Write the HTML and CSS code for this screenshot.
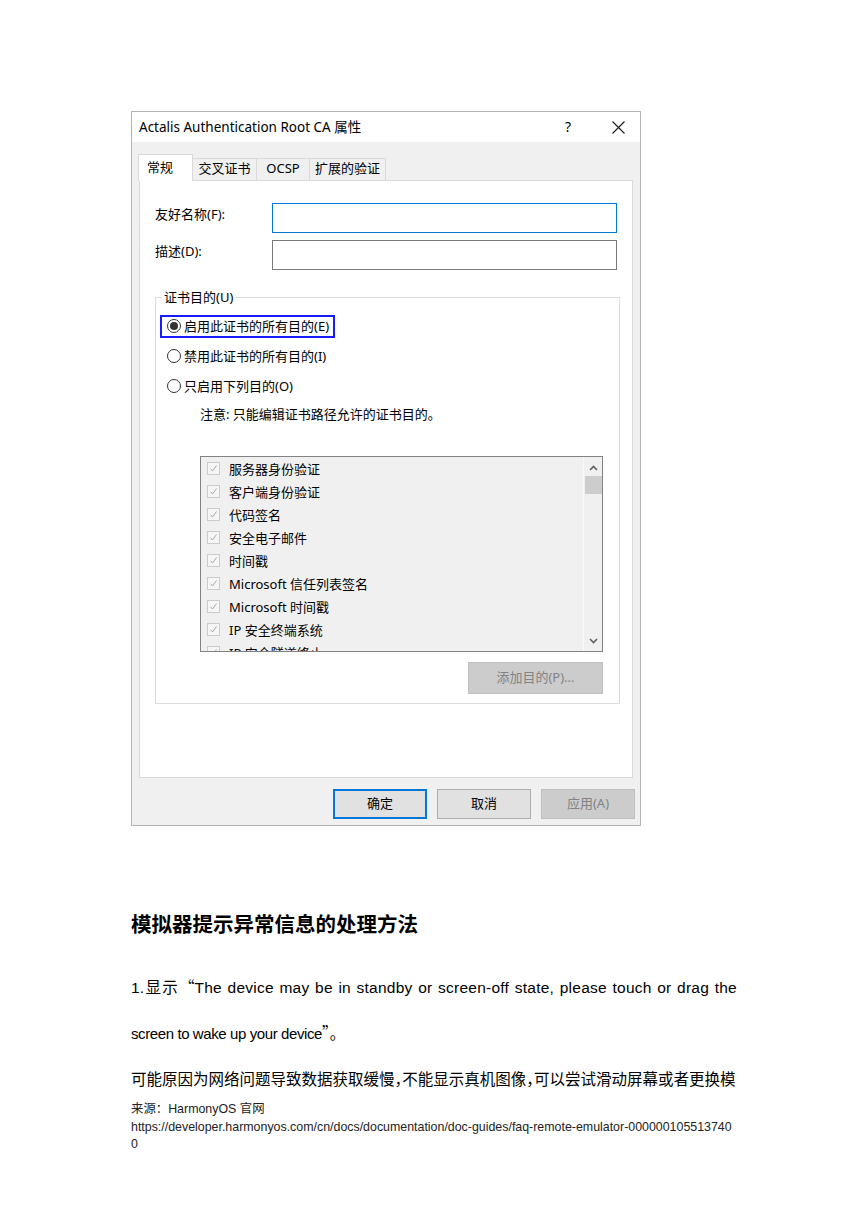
FILE: index.html
```html
<!DOCTYPE html>
<html lang="zh-CN">
<head>
  <meta charset="UTF-8" />
  <meta name="viewport" content="width=device-width, initial-scale=1.0"/>
  <title>模拟器提示异常信息的处理方法</title>
  <link rel="stylesheet" href="styles.css">
</head>
<body>

<div class="page">

  <div class="dialog">
    <div class="titlebar">
      <span class="title">Actalis Authentication Root CA 属性</span>
      <span class="help">?</span>
      <span class="close">
        <svg width="13" height="13" viewBox="0 0 13 13">
          <path d="M0.5 0.5 L12.5 12.5 M12.5 0.5 L0.5 12.5" stroke="#1a1a1a" stroke-width="1.1" fill="none"/>
        </svg>
      </span>
    </div>

    <div class="dialog-body">
      <div class="tabs">
        <div class="tab active">常规</div>
        <div class="tab w64">交叉证书</div>
        <div class="tab w53">OCSP</div>
        <div class="tab w76">扩展的验证</div>
      </div>

      <div class="panel">
        <div class="field-row first">
          <label class="field-label">友好名称(F):</label>
          <div class="textbox focused"></div>
        </div>
        <div class="field-row">
          <label class="field-label">描述(D):</label>
          <div class="textbox"></div>
        </div>

        <fieldset class="group">
          <legend>证书目的(U)</legend>

          <div class="radio focused"><span class="radio-dot checked"></span>启用此证书的所有目的(E)</div>
          <div class="radio"><span class="radio-dot"></span>禁用此证书的所有目的(I)</div>
          <div class="radio"><span class="radio-dot"></span>只启用下列目的(O)</div>

          <p class="note">注意: 只能编辑证书路径允许的证书目的。</p>

          <div class="listbox">
            <ul class="purposes">
              <li><span class="check"><svg width="11" height="11" viewBox="0 0 11 11"><path d="M2.5 5.8 L4.5 8 L8.5 2.5" stroke="#a8a8a8" stroke-width="1" fill="none"/></svg></span>服务器身份验证</li>
              <li><span class="check"><svg width="11" height="11" viewBox="0 0 11 11"><path d="M2.5 5.8 L4.5 8 L8.5 2.5" stroke="#a8a8a8" stroke-width="1" fill="none"/></svg></span>客户端身份验证</li>
              <li><span class="check"><svg width="11" height="11" viewBox="0 0 11 11"><path d="M2.5 5.8 L4.5 8 L8.5 2.5" stroke="#a8a8a8" stroke-width="1" fill="none"/></svg></span>代码签名</li>
              <li><span class="check"><svg width="11" height="11" viewBox="0 0 11 11"><path d="M2.5 5.8 L4.5 8 L8.5 2.5" stroke="#a8a8a8" stroke-width="1" fill="none"/></svg></span>安全电子邮件</li>
              <li><span class="check"><svg width="11" height="11" viewBox="0 0 11 11"><path d="M2.5 5.8 L4.5 8 L8.5 2.5" stroke="#a8a8a8" stroke-width="1" fill="none"/></svg></span>时间戳</li>
              <li><span class="check"><svg width="11" height="11" viewBox="0 0 11 11"><path d="M2.5 5.8 L4.5 8 L8.5 2.5" stroke="#a8a8a8" stroke-width="1" fill="none"/></svg></span>Microsoft 信任列表签名</li>
              <li><span class="check"><svg width="11" height="11" viewBox="0 0 11 11"><path d="M2.5 5.8 L4.5 8 L8.5 2.5" stroke="#a8a8a8" stroke-width="1" fill="none"/></svg></span>Microsoft 时间戳</li>
              <li><span class="check"><svg width="11" height="11" viewBox="0 0 11 11"><path d="M2.5 5.8 L4.5 8 L8.5 2.5" stroke="#a8a8a8" stroke-width="1" fill="none"/></svg></span>IP 安全终端系统</li>
              <li><span class="check"><svg width="11" height="11" viewBox="0 0 11 11"><path d="M2.5 5.8 L4.5 8 L8.5 2.5" stroke="#a8a8a8" stroke-width="1" fill="none"/></svg></span>IP 安全隧道终止</li>
            </ul>
            <div class="scrollbar">
              <svg class="arrow" width="9" height="6" viewBox="0 0 9 6"><path d="M1 5 L4.5 1.5 L8 5" stroke="#606060" stroke-width="1.6" fill="none"/></svg>
              <div class="thumb"></div>
              <div class="track"></div>
              <svg class="arrow" width="9" height="6" viewBox="0 0 9 6"><path d="M1 1 L4.5 4.5 L8 1" stroke="#606060" stroke-width="1.6" fill="none"/></svg>
            </div>
          </div>

          <div class="add-row">
            <button class="btn disabled wide">添加目的(P)...</button>
          </div>
        </fieldset>
      </div>

      <div class="dialog-buttons">
        <button class="btn default">确定</button>
        <button class="btn">取消</button>
        <button class="btn disabled">应用(A)</button>
      </div>
    </div>
  </div>

  <h2 class="section-title">模拟器提示异常信息的处理方法</h2>

  <p class="text">
    <span class="line justified">1.显示<span class="cjk">“</span>The device may be in standby or screen-off state, please touch or drag the</span>
    <span class="line tight">screen to wake up your device<span class="cjk">”。</span></span>
  </p>
  <p class="text cn"><span class="line">可能原因为网络问题导致数据获取缓慢，不能显示真机图像，可以尝试滑动屏幕或者更换模</span></p>

  <div class="source">
    来源：HarmonyOS 官网<br>
    https://developer.harmonyos.com/cn/docs/documentation/doc-guides/faq-remote-emulator-000000105513740<br>
    0
  </div>

</div>

</body>
</html>
```

FILE: styles.css
```css
* {
  box-sizing: border-box;
}

body {
  margin: 0;
  background: #fff;
  color: #000;
  font-family: "Noto Sans", "Noto Sans CJK SC", sans-serif;
}

.page {
  width: 868px;
  padding: 111px 0 0 131px;
}

/* ---------- dialog ---------- */

.dialog {
  width: 510px;
  height: 715px;
  border: 1px solid #b4b4b4;
  background: #f0f0f0;
  font-size: 13px;
  display: flex;
  flex-direction: column;
}

.titlebar {
  height: 30px;
  background: #fff;
  display: flex;
  align-items: center;
  padding: 0 0 2px 7px;
}

.title {
  flex: 1;
  font-size: 13.5px;
}

.help {
  width: 16px;
  margin-right: 20px;
  text-align: center;
  font-size: 14px;
}

.close {
  width: 44px;
  display: flex;
  justify-content: center;
  align-items: center;
  padding-top: 2px;
}

.close svg {
  display: block;
}

.dialog-body {
  flex: 1;
  padding: 12px 7px 0 6px;
  display: flex;
  flex-direction: column;
}

.tabs {
  height: 26px;
  display: flex;
  align-items: flex-end;
}

.tab {
  height: 22px;
  line-height: 18px;
  border: 1px solid #d9d9d9;
  border-bottom: none;
  border-left: none;
  background: #f0f0f0;
  text-align: center;
  position: relative;
}

.tab.w64 {
  width: 64px;
}

.tab.w53 {
  width: 53px;
}

.tab.w76 {
  width: 76px;
}

.tab.active {
  height: 27px;
  width: 55px;
  line-height: 24px;
  padding: 0 8px;
  text-align: left;
  border-left: 1px solid #d9d9d9;
  background: #fff;
  margin-bottom: -1px;
  z-index: 1;
}

.panel {
  height: 598px;
  margin-left: 1px;
  background: #fff;
  border: 1px solid #d9d9d9;
  padding: 0 14px 0 15px;
}

.field-row {
  display: flex;
  margin-top: 7px;
}

.field-row.first {
  margin-top: 22px;
}

.field-label {
  width: 117px;
  line-height: 18px;
  padding-top: 2px;
}

.textbox {
  width: 345px;
  height: 30px;
  border: 1px solid #7a7a7a;
  background: #fff;
}

.textbox.focused {
  border-color: #0078d7;
}

/* ---------- purposes group ---------- */

.group {
  width: 465px;
  margin: 18px 0 0;
  padding: 0 0 9px;
  border: 1px solid #dcdcdc;
}

.group legend {
  margin-left: 6px;
  padding: 0 2px;
  line-height: 18px;
}

.radio {
  display: flex;
  align-items: center;
  height: 23px;
  width: 175px;
  margin: 0 0 7px 4px;
  padding: 0 0 2px 5px;
  border: 2px solid transparent;
  white-space: nowrap;
}

.radio:first-of-type {
  margin-top: 9px;
}

.radio.focused {
  border-color: #1a1aff;
}

.radio-dot {
  width: 14px;
  height: 14px;
  border: 1px solid #333;
  border-radius: 50%;
  margin-right: 3px;
  display: flex;
  align-items: center;
  justify-content: center;
  background: #fff;
}

.radio-dot.checked::after {
  content: "";
  width: 8px;
  height: 8px;
  border-radius: 50%;
  background: #333;
}

.note {
  margin: 2px 0 0 44px;
  line-height: 18px;
}

.listbox {
  width: 403px;
  height: 196px;
  margin: 33px 0 0 44px;
  border: 1px solid #828282;
  background: #f0f0f0;
  display: flex;
  overflow: hidden;
}

.purposes {
  list-style: none;
  margin: 0;
  padding: 0;
  flex: 1;
}

.purposes li {
  height: 23px;
  display: flex;
  align-items: center;
  padding-left: 6px;
  white-space: nowrap;
}

.check {
  width: 13px;
  height: 13px;
  margin-right: 9px;
  border: 1px solid #cbcbcb;
  background: #f6f6f6;
  display: flex;
  align-items: center;
  justify-content: center;
}

.check svg {
  display: block;
}

.scrollbar {
  width: 19px;
  border-left: 1px solid #fafafa;
  display: flex;
  flex-direction: column;
  align-items: center;
  padding: 8px 0 7px;
}

.scrollbar .arrow {
  display: block;
}

.thumb {
  width: 17px;
  height: 18px;
  margin-top: 5px;
  background: #cdcdcd;
}

.track {
  flex: 1;
}

.add-row {
  width: 447px;
  margin-top: 10px;
  display: flex;
  justify-content: flex-end;
}

/* ---------- buttons ---------- */

.btn {
  width: 94px;
  height: 30px;
  font: inherit;
  color: #000;
  background: #e1e1e1;
  border: 1px solid #adadad;
  padding: 0 0 3px;
}

.btn.default {
  border: 2px solid #0078d7;
}

.btn.disabled {
  background: #cccccc;
  border-color: #bfbfbf;
  color: #838383;
}

.btn.wide {
  width: 135px;
  height: 32px;
}

.dialog-buttons {
  display: flex;
  justify-content: flex-end;
  gap: 10px;
  margin: 11px -2px 0 0;
}

/* ---------- article text ---------- */

.section-title {
  margin: 82px 0 25px;
  font-family: "Noto Sans CJK SC", sans-serif;
  font-size: 20.5px;
  font-weight: 700;
  line-height: 30px;
}

.text {
  margin: 0;
  font-family: "Liberation Sans", "Noto Sans CJK SC", sans-serif;
  font-size: 15.5px;
}

.line {
  display: block;
  width: 606px;
  height: 46px;
  line-height: 46px;
  white-space: nowrap;
}

.line.justified {
  letter-spacing: 0.25px;
  text-align: justify;
  text-align-last: justify;
}

.line.tight {
  font-size: 15px;
  letter-spacing: -0.4px;
}

.text.cn {
  font-family: "Noto Sans CJK SC", sans-serif;
  font-feature-settings: "halt";
}

.cjk {
  font-family: "Noto Sans CJK SC", sans-serif;
  font-size: 15.5px;
  letter-spacing: 0;
}

.source {
  font-family: "Liberation Sans", "Noto Sans CJK SC", sans-serif;
  font-size: 12.4px;
  line-height: 17.5px;
  color: #222;
}
```
